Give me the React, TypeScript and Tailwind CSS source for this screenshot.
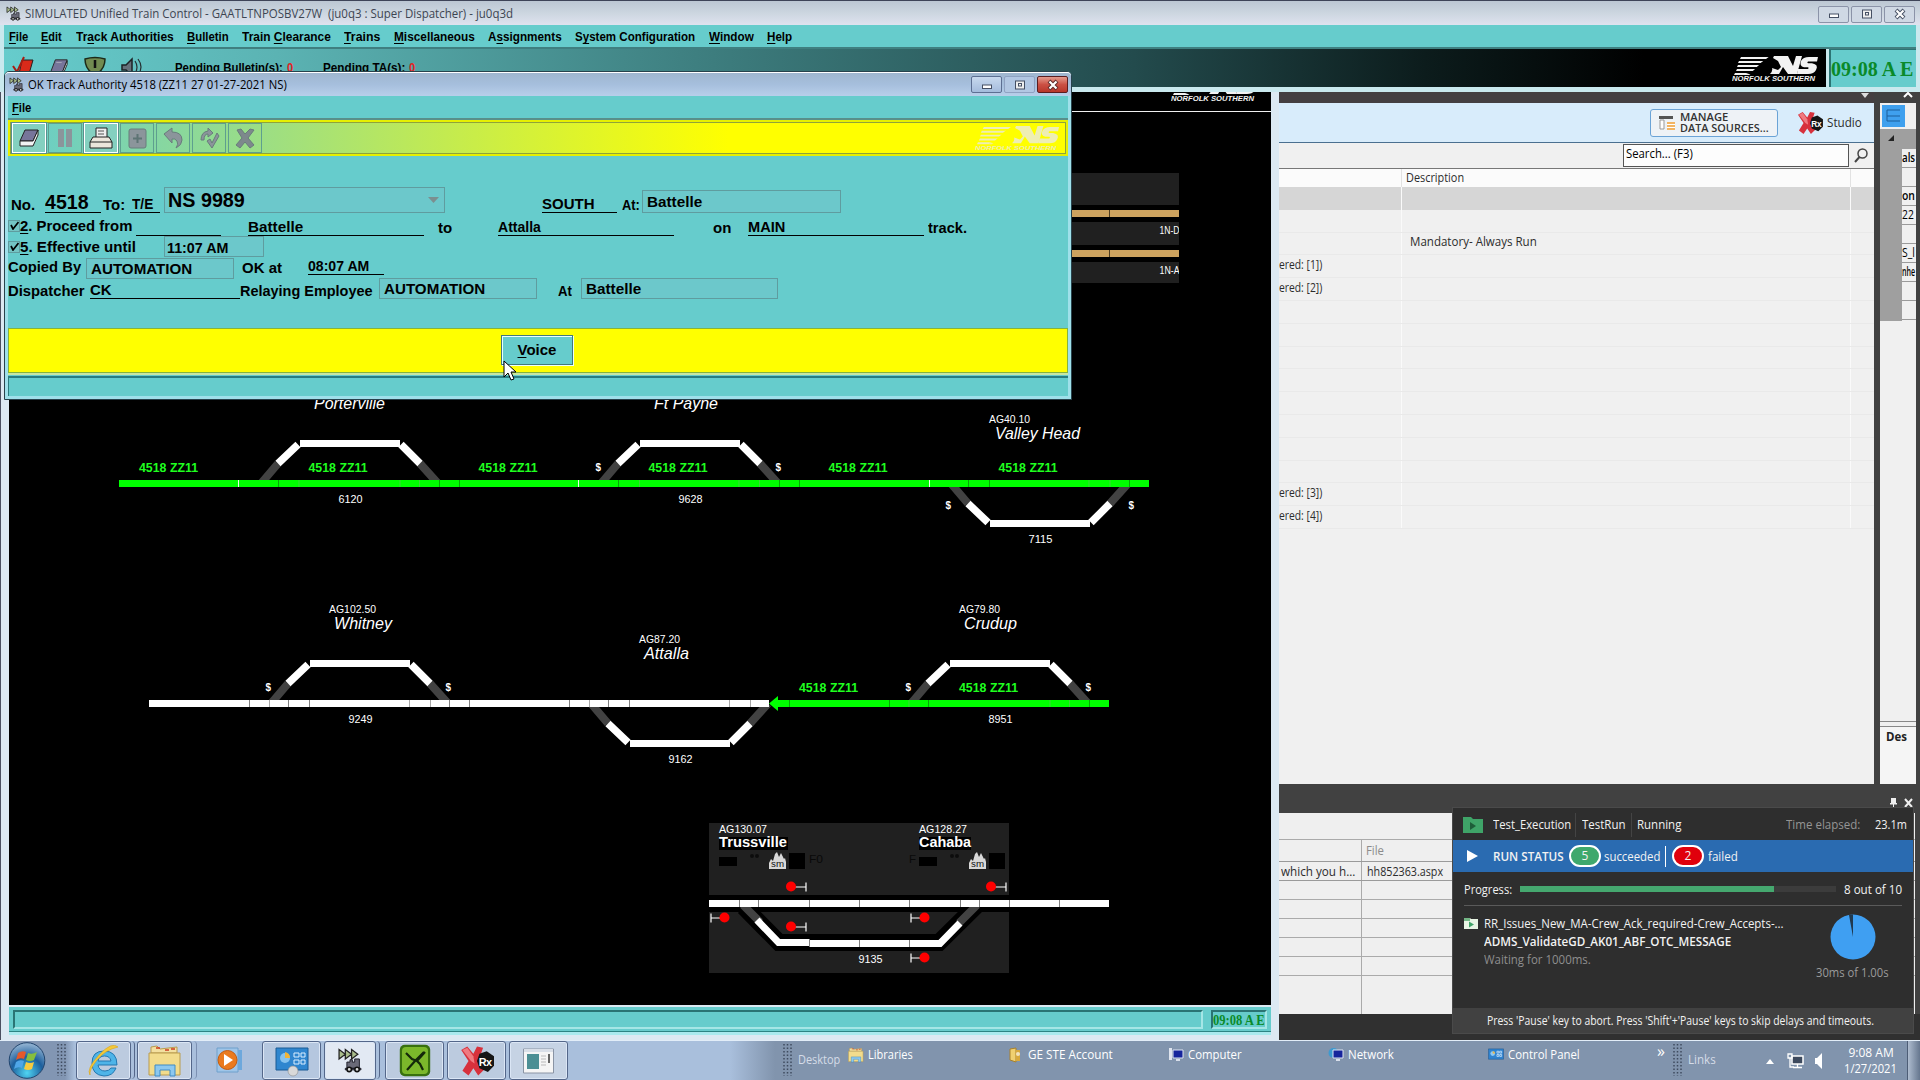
import React, { useLayoutEffect, useRef, useState } from 'react';

/* Text that is condensed or widened to an exact advance width. */
function T({ w, className = '', children }: { w: number; className?: string; children: React.ReactNode }) {
  const ref = useRef<HTMLSpanElement>(null);
  const [scale, setScale] = useState(1);
  useLayoutEffect(() => {
    if (ref.current && ref.current.offsetWidth) setScale(w / ref.current.offsetWidth);
  }, [w]);
  return (
    <span className={`inline-block shrink-0 whitespace-nowrap ${className}`} style={{ width: w }}>
      <span ref={ref} className="inline-block origin-left" style={{ transform: `scaleX(${scale})` }}>
        {children}
      </span>
    </span>
  );
}

function NSLogo({ className, color, cut }: { className: string; color: string; cut: string }) {
  return (
    <svg className={className} viewBox="0 0 88 25" preserveAspectRatio="none">
      <path d="M9 1H40L37 3H8zM7 5H32L29 7H6zM6 9H28L25 11H5zM5 13H24L21 15H4zM3 17H20L17 19H2z" fill={color} />
      <path d="M20 16L30 6L34 3L38 0L42 1L48 4L53 10L51 12L46 10L43 11L47 18H42L35 12L28 18H14z" fill={cut} />
      <path d="M42 0H56L61 10L64 0H70L65 18H56L51 11L47 18H38Q41 15 40 12L46 14L49 11L46 5L41 2z" fill={color} />
      <path d="M86 1L85 5.500H76Q74.500 6.500 76 7.200H80Q87 8.500 84 14Q82 18 76 18H65L66 13H76Q77.500 12 76 11.300H72Q67 10 69 5Q71 1 77 1z" fill={color} />
      <text x="0" y="25" fontSize="6.5" fontWeight="700" fontStyle="italic" fontFamily="Liberation Sans, Arial, sans-serif" textLength="83" lengthAdjust="spacingAndGlyphs" fill={color}>
        NORFOLK SOUTHERN
      </text>
    </svg>
  );
}

function TrainIcon({ className }: { className: string }) {
  return (
    <svg className={className} viewBox="0 0 16 16">
      <path d="M1 1l4 3-4 3zM5 1l4 3-4 3zM9 1l4 3-4 3z" fill="#a9bd8b" stroke="#222" strokeWidth=".8" />
      <path d="M6 9h2V7.500h1.500V9H11V7h3v6H6zM5 13h10v1H5z" fill="#6a6a78" stroke="#1c1c28" strokeWidth=".6" />
      <circle cx="7.500" cy="13.700" r="1.400" fill="#ddd" stroke="#111" />
      <circle cx="12.500" cy="13.700" r="1.400" fill="#ddd" stroke="#111" />
    </svg>
  );
}

function WinButtons({ active = false }: { active?: boolean }) {
  const base = 'flex h-[17px] w-[31px] items-center justify-center rounded-[2px] border';
  const pale = active ? 'border-[#5d6f92] bg-gradient-to-b from-[#c8d9ee] to-[#a4bbdc]' : 'border-[#8b93a8] bg-[#cfd8e4]';
  return (
    <div className="flex gap-[2px]">
      <div className={`${base} ${pale}`}>
        <svg className="h-3 w-3" viewBox="0 0 12 12"><rect x="1.500" y="6" width="9" height="3.500" fill="#fff" stroke="#454f63" /></svg>
      </div>
      <div className={`${base} ${active ? 'border-[#8fa2c2] bg-[#b2c7e3]' : pale}`}>
        <svg className="h-3 w-3" viewBox="0 0 12 12"><rect x="1.500" y="2" width="9" height="8" fill="#eee" stroke="#454f63" /><rect x="4.500" y="4.500" width="3" height="2.500" fill="none" stroke="#454f63" /></svg>
      </div>
      <div className={`${base} ${active ? 'border-[#5b1d20] bg-gradient-to-b from-[#e39a8e] via-[#cb5044] to-[#b8362a]' : pale}`}>
        <svg className="h-3 w-3" viewBox="0 0 12 12">
          <path d="M2 2L10 10M10 2L2 10" stroke={active ? '#5b2a2a' : '#454f63'} strokeWidth="4" />
          <path d="M2.500 2.500L9.500 9.500M9.500 2.500L2.500 9.500" stroke="#fff" strokeWidth="2.200" />
        </svg>
      </div>
    </div>
  );
}

const ARIAL = "font-['Liberation_Sans',Arial,sans-serif]";
const SEGOE = "font-['Open_Sans','Noto_Sans',sans-serif]";

/* ---------- Main window header ---------- */

const MENUS: [string, string, string, number][] = [
  ['', 'F', 'ile', 19], ['', 'E', 'dit', 21], ['Tr', 'a', 'ck Authorities', 98], ['', 'B', 'ulletin', 42],
  ['Train ', 'C', 'learance', 89], ['', 'T', 'rains', 36], ['', 'M', 'iscellaneous', 81], ['A', 's', 'signments', 74],
  ['S', 'y', 'stem Configuration', 120], ['', 'W', 'indow', 45], ['', 'H', 'elp', 25],
];

function BookIcon() {
  return (
    <svg className="h-full w-full" viewBox="0 0 22 22">
      <path d="M7 2H20L15 15H2z" fill="#77759a" stroke="#222" />
      <path d="M2 15v4h13l5-12V3l-5 12z" fill="#f2f2f2" stroke="#222" />
      <path d="M8 5h6" stroke="#aab" />
    </svg>
  );
}

function MainHeader() {
  return (
    <div className="absolute left-0 top-0 z-20 flex h-[92px] w-[1920px] flex-col border-t border-[#3e4458] bg-[#c9e9ee]">
      <div className="flex h-[24px] items-center bg-gradient-to-b from-[#bcc7d3] via-[#ccd6e0] to-[#dfe2ef] pl-[6px] pr-[5px]">
        <TrainIcon className="mr-[4px] h-[15px] w-[15px]" />
        <T w={488} className={`${SEGOE} pt-[2px] text-[12px] leading-[18px] text-[#3d4552]`}>
          SIMULATED Unified Train Control - GAATLTNPOSBV27W&nbsp; (ju0q3 : Super Dispatcher) - ju0q3d
        </T>
        <div className="ml-auto pt-[2px]"><WinButtons /></div>
      </div>
      <div className={`ml-[4px] mr-[4px] flex h-[22px] items-center gap-[13.300px] bg-[#66cccc] pl-[5px] pt-[2px] text-[13px] font-bold text-black ${ARIAL}`}>
        {MENUS.map(([a, u, b, w]) => (
          <T key={a + u + b} w={w}>{a}<span className="underline underline-offset-2">{u}</span>{b}</T>
        ))}
      </div>
      <div className="mx-[4px] h-[2px] bg-[#3f7f80]" />
      <div className="mx-[4px] flex h-[38px]">
        <div className="flex h-full w-[1822px] items-start bg-[linear-gradient(90deg,#66cccc_0%,#5bb3b3_15%,#3e7f80_38%,#234b4d_62%,#0c1c1c_78%,#000_90%)]">
          <svg className="ml-[8px] mt-[7px] h-[22px] w-[22px]" viewBox="0 0 22 22"><path d="M10 4h11l-4 14H7z" fill="#d92a1a" stroke="#222" /><path d="M1 10l4 6L12 1" fill="none" stroke="#a61d13" strokeWidth="2" /></svg>
          <span className="ml-[14px] mt-[9px] h-[20px] w-[22px]"><BookIcon /></span>
          <svg className="ml-[13px] mt-[7px] h-[22px] w-[24px]" viewBox="0 0 24 22"><path d="M2 3Q12 0 22 3Q22 12 15 17H9Q2 12 2 3z" fill="#718b51" stroke="#1d2a18" strokeWidth="1.500" /><path d="M12 4v8" stroke="#111" strokeWidth="2.500" /></svg>
          <svg className="ml-[13px] mt-[8px] h-[22px] w-[24px]" viewBox="0 0 24 22"><path d="M2 8h4l6-6v17l-6-6H2z" fill="#66707a" stroke="#1c2226" strokeWidth="1.500" /><path d="M15 4q4 6 0 13M18 2q6 8 0 16" fill="none" stroke="#243133" strokeWidth="1.200" /></svg>
          <div className={`ml-[31px] mt-[10px] flex text-[13px] font-bold leading-[18px] text-black ${ARIAL}`}>
            <T w={108}>Pending Bulletin(s):</T><T w={6} className="ml-[4px] text-[#e32222]">0</T>
            <T w={82} className="ml-[30px]">Pending TA(s):</T><T w={6} className="ml-[4px] text-[#e32222]">0</T>
          </div>
          <NSLogo className="ml-auto mr-[6px] mt-[7px] h-[25px] w-[88px]" color="#f2f2f2" cut="#000000" />
        </div>
        <div className="ml-[3px] flex h-[38px] flex-1 items-center border-l-2 border-t border-[#2c7474] bg-[#66cccc]">
          <T w={82} className="pt-[1px] font-['Liberation_Serif',serif] text-[22px] font-bold leading-[36px] text-[#0a8a2a]">09:08 A E</T>
        </div>
      </div>
    </div>
  );
}

/* ---------- Track line drawing ---------- */

function Label({ x, y, w, size, children, fill = '#fff', bold, italic }: { x: number; y: number; w: number; size: number; children: string; fill?: string; bold?: boolean; italic?: boolean }) {
  return (
    <text x={x} y={y} textLength={w} lengthAdjust="spacingAndGlyphs" fontSize={size} fill={fill} fontWeight={bold ? 700 : 400} fontStyle={italic ? 'italic' : 'normal'} fontFamily="Liberation Sans, Arial, sans-serif">
      {children}
    </text>
  );
}

/* A passing siding; x is the left end of its level part, dir -1 lies above the main. */
function Siding({ x, y, dir }: { x: number; y: number; dir: 1 | -1 }) {
  const lvl = y + dir * 40;
  const mid = y + dir * 20;
  const end = lvl - dir * 1;
  return (
    <g strokeWidth="8" fill="none">
      <path d={`M${x - 39} ${y}L${x - 22} ${mid}M${x + 138} ${y}L${x + 120} ${mid}`} stroke="#424242" />
      <path d={`M${x - 22} ${mid}L${x - 2} ${end}M${x + 120} ${mid}L${x + 101} ${end}`} stroke="#fff" strokeWidth="7.500" />
      <path d={`M${x} ${lvl}H${x + 100}`} stroke="#fff" strokeWidth="7" />
    </g>
  );
}

function Signal({ x, y, left }: { x: number; y: number; left?: boolean }) {
  const d = left ? -1 : 1;
  return (
    <g>
      <path d={`M${x} ${y + 0.5}h${d * (left ? 13.5 : 15)}m0 -4.500v9`} stroke="#fff" strokeWidth="1.200" fill="none" />
      <circle cx={x} cy={y} r="5" fill="#f00" />
    </g>
  );
}

function StationBlock({ x }: { x: number }) {
  return (
    <g>
      <path d={`M${x} 857h18v9h-18zM${x + 70} 853h16v16h-16z`} fill="#000" />
      <circle cx={x + 33} cy="856" r="2" fill="#0c0c0c" /><circle cx={x + 38} cy="856" r="2" fill="#0c0c0c" />
      <path d={`M${x + 50} 869v-6l2-4 2 2 2-7 2-2 2 5 2-4 3 6 1-1 1 4v7z`} fill="#d8d8d8" />
      <Label x={x + 52} y={867} w={13} size={9} fill="#111">sm</Label>
    </g>
  );
}

const GREEN = '#00ff00';
const AUTH: [number, number][] = [[139, 472], [308.5, 472], [478.5, 472], [648.5, 472], [828.5, 472], [998.5, 472], [799, 692], [959, 692]];
const LENGTHS: [number, number, string][] = [[338.5, 503, '6120'], [678.5, 503, '9628'], [1028.5, 543, '7115'], [348.5, 723, '9249'], [668.5, 763, '9162'], [988.5, 723, '8951'], [858.5, 963, '9135']];
const STATIONS: [number, number, number, string][] = [[314, 409, 71, 'Porterville'], [654, 409, 64, 'Ft Payne'], [995, 439, 85, 'Valley Head'], [334, 629, 58, 'Whitney'], [644, 659, 45, 'Attalla'], [964, 629, 53, 'Crudup']];
const POSTS: [number, number, number, string][] = [[989, 423, 41, 'AG40.10'], [329, 613, 47, 'AG102.50'], [639, 643, 41, 'AG87.20'], [959, 613, 41, 'AG79.80'], [719, 833, 48, 'AG130.07'], [919, 833, 48, 'AG128.27']];
const DOLLARS: [number, number][] = [[595.5, 471], [775.5, 471], [945.5, 509], [1128.5, 509], [265.5, 691], [445.5, 691], [905.5, 691], [1085.5, 691]];

function TrackMap() {
  return (
    <svg className="block h-[893px] w-[1262px] bg-black" viewBox="9 112 1262 893">
      <g fill="#202020"><path d="M1060 173h119v32h-119zM1060 222h119v23h-119zM1060 262h119v21h-119z" /></g>
      <path d="M1060 213.500h119M1060 253.500h119" stroke="#cda35f" strokeWidth="7" />
      <path d="M1109.500 210v7M1109.500 250v7" stroke="#4f3d1f" />
      <Label x={1159.5} y={234} w={20} size={10}>1N-D</Label>
      <Label x={1159.5} y={274} w={20} size={10}>1N-A</Label>
      <path d="M1179 224h2v12h-2zM1179 264h2v12h-2z" fill="#000" />

      <Siding x={300} y={483.5} dir={-1} />
      <Siding x={640} y={483.5} dir={-1} />
      <Siding x={990} y={483.5} dir={1} />
      <path d="M119 483.500H1149" stroke={GREEN} strokeWidth="7" />
      <path d="M238.500 480v7M578.500 480v7M929.500 480v7" stroke="#e8ffe8" />
      <path d="M278.500 480v7M459.500 480v7M618.500 480v7M779.500 480v7M799.500 480v7M968.500 480v7M989.500 480v7M1129.500 480v7M439.500 480v7" stroke="#06a806" />
      <path d="M299 480v7M400 480v7M419.500 480v7M639.500 480v7M739 480v7M759.500 480v7M1089 480v7M1110 480v7" stroke="#3fd43a" />

      <Siding x={310} y={703.5} dir={-1} />
      <Siding x={630} y={703.5} dir={1} />
      <Siding x={950} y={703.5} dir={-1} />
      <path d="M149 703.500H769" stroke="#fff" strokeWidth="7" />
      <path d="M249.500 700v7M288.500 700v7M309.500 700v7M469.500 700v7M569.500 700v7M608.500 700v7M629.500 700v7M449.500 700v7" stroke="#808080" />
      <path d="M269.500 700v7M409.500 700v7M430.500 700v7M589.500 700v7M729.500 700v7M750.500 700v7" stroke="#a8a8a8" />
      <path d="M776 703.500H1109" stroke={GREEN} strokeWidth="7" />
      <path d="M769 703.500L778 696v15z" fill={GREEN} />
      <path d="M789.500 700v7M889.500 700v7M928.500 700v7M1089.500 700v7" stroke="#06a806" />
      <path d="M909 700v7M1050 700v7M1069.500 700v7" stroke="#3fd43a" />

      <path d="M709 823h300v150h-300z" fill="#202020" />
      <path d="M709 903.500h300" stroke="#000" strokeWidth="17" />
      <path d="M744 907L779 942.500H939L977 905" stroke="#000" strokeWidth="17" fill="none" />
      <path d="M743 905L760 922M977 905L959 923" stroke="#424242" strokeWidth="8" />
      <path d="M757 920L778.500 942.500H809M809 943.500H940L960 923" stroke="#fff" strokeWidth="7" fill="none" />
      <path d="M709 903.500H1109" stroke="#fff" strokeWidth="7" />
      <path d="M739.500 900v7M758.500 900v7M809.500 900v7M859.500 900v7M909.500 900v7M960.500 900v7M979.500 900v7M1009.500 900v7M1059.500 900v7M809.500 939v8M859.500 940v7M909.500 940v7" stroke="#808080" />
      <path d="M719 837h69v13h-69zM919 837h52v13h-52z" fill="#000" />
      <Label x={719} y={847} w={68} size={14} bold>Trussville</Label>
      <Label x={919} y={847} w={52} size={14} bold>Cahaba</Label>
      <StationBlock x={719} />
      <StationBlock x={919} />
      <Label x={809} y={863} w={14} size={10} fill="#090909">F0</Label>
      <Label x={909} y={863} w={7} size={10} fill="#090909">F</Label>
      <Signal x={791} y={886.5} /><Signal x={991} y={886.5} /><Signal x={791} y={926.5} />
      <Signal x={724.5} y={917.5} left /><Signal x={924.5} y={917.5} left /><Signal x={924.5} y={957.5} left />

      {AUTH.map(([x, y]) => <Label key={`${x}-${y}`} x={x} y={y} w={59} size={13.5} fill="#1fff1f" bold>4518 ZZ11</Label>)}
      {LENGTHS.map(([x, y, s]) => <Label key={s} x={x} y={y} w={24} size={10}>{s}</Label>)}
      {STATIONS.map(([x, y, w, s]) => <Label key={s} x={x} y={y} w={w} size={17} italic>{s}</Label>)}
      {POSTS.map(([x, y, w, s]) => <Label key={s} x={x} y={y} w={w} size={10}>{s}</Label>)}
      {DOLLARS.map(([x, y]) => <Label key={`${x}${y}`} x={x} y={y} w={5.5} size={11} bold>$</Label>)}
    </svg>
  );
}

function TrackWindow() {
  return (
    <div className="absolute left-0 top-[91px] z-10 flex h-[949px] w-[1279px] flex-col border-l border-[#4b5060] bg-[#dce9f2] pl-[8px] pr-[8px]">
      <div className="flex h-[20px] justify-end bg-black pr-[12px] overflow-hidden">
        <NSLogo className="-mt-[15px] h-[25px] w-[88px]" color="#f2f2f2" cut="#000000" />
      </div>
      <div className="h-[1px] bg-[#f0f0f0]" />
      <TrackMap />
      <div className="mt-[2px] flex h-[25px] border-b border-[#2c8484] bg-[#66cccc] pb-[2px] pl-[4px] pt-[3px]">
        <div className="w-[1190px] border-b-2 border-l-2 border-r-2 border-t-2 border-b-[#a5e6e6] border-l-[#2a7474] border-r-[#a5e6e6] border-t-[#2a7474]" />
        <div className="ml-[8px] flex w-[56px] items-center border-2 border-b-[#a5e6e6] border-l-[#2a7474] border-r-[#a5e6e6] border-t-[#2a7474]">
          <T w={52} className="font-['Liberation_Serif',serif] text-[15px] font-bold leading-[16px] text-[#0a8a2a]">09:08 A E</T>
        </div>
      </div>
      <div className="h-[3px] bg-[#a9eaee]" />
    </div>
  );
}

/* ---------- Track authority dialog ---------- */

function ToolButton({ children, on }: { children: React.ReactNode; on?: boolean }) {
  return (
    <div className={`flex h-[30px] w-[34px] items-center justify-center border ${on ? 'border-white bg-[#84d0c0] shadow-[0_0_0_1px_#5b8e8e]' : 'border-[#5e9f8f]'}`}>
      <svg className="h-[24px] w-[26px]" viewBox="0 0 26 24">{children}</svg>
    </div>
  );
}

const BOX = 'flex items-center border border-[#5f9c9f] bg-[#6cc8cb]';

function Check() {
  return (
    <span className="flex h-[12px] w-[12px] shrink-0 items-center justify-center border border-[#5f9c9f] bg-[#74c4c4]">
      <svg className="h-[9px] w-[9px]" viewBox="0 0 9 9"><path d="M1 4l2 4L8.500 1" fill="none" stroke="#000" strokeWidth="1.700" /></svg>
    </span>
  );
}

function Dialog() {
  return (
    <div className="absolute left-[4px] top-[71px] z-30 flex h-[329px] w-[1068px] flex-col rounded-t-[5px] border border-[#28424c] bg-[#9fe0ea] px-[3px] pb-[3px]">
      <div className="-mx-[3px] flex h-[24px] items-center rounded-t-[4px] border-t border-white bg-gradient-to-b from-[#9fb6cf] via-[#a6bfdd] to-[#b8cfea] pl-[4px] pr-[3px]">
        <TrainIcon className="h-[15px] w-[15px]" />
        <T w={259} className={`ml-[4px] pt-[1px] text-[12px] leading-[18px] text-black ${SEGOE}`}>OK Track Authority 4518 (ZZ11 27 01-27-2021 NS)</T>
        <div className="ml-auto"><WinButtons active /></div>
      </div>
      <div className={`flex h-[22px] items-center bg-[#66cccc] pl-[4px] pt-[2px] text-[13px] font-bold ${ARIAL}`}>
        <T w={19}><span className="underline underline-offset-2">F</span>ile</T>
      </div>
      <div className="h-[2px] bg-[#588f8b]" />
      <div className="flex h-[36px] items-center gap-[2px] border-2 border-[#e6f000] bg-[linear-gradient(90deg,#66cccc_0%,#ffff00_68%)] pl-[2px] shadow-[inset_0_0_0_1px_#8fa33a]">
        <ToolButton on><path d="M9 4H22L17 15H4z" fill="#77759a" stroke="#222" /><path d="M4 15v5h13l5-11V4l-5 11z" fill="#f2f2f2" stroke="#222" /></ToolButton>
        <ToolButton><path d="M6 3h6v18H6zM14 3h6v18h-6z" fill="#8b959b" /></ToolButton>
        <ToolButton on><path d="M8 12V2h11v10" fill="#eee" stroke="#222" /><path d="M10 5h6M10 8h6" stroke="#555" /><path d="M5 11h16l3 5v6H2v-6z" fill="#ece6dc" stroke="#222" /><path d="M2 16h22" stroke="#222" /></ToolButton>
        <ToolButton><rect x="5" y="3" width="17" height="19" rx="2" fill="#8b959b" stroke="#697c7c" /><path d="M13.500 8v9M9 12.500h9" stroke="#5d7474" strokeWidth="2" /></ToolButton>
        <ToolButton><path d="M4 8l8-6v4q10 0 10 8q0 5-6 8q3-4 1-7t-5-2v4z" fill="#8b959b" stroke="#697c7c" /></ToolButton>
        <ToolButton><path d="M5 14q0-8 7-9V2l5 5-5 4V8q-4 0-4 6zM11 15l3-2 2 4 5-10 2 3-7 12z" fill="#8b959b" stroke="#697c7c" /></ToolButton>
        <ToolButton><path d="M5 4l4-1 4 5 5-5 4 1-6 8 6 7-4 3-5-6-5 6-4-3 6-7z" fill="#7d888c" stroke="#697c7c" /></ToolButton>
        <NSLogo className="ml-auto mr-[5px] h-[24px] w-[86px]" color="#eeeeb4" cut="#ffff00" />
      </div>

      <div className={`flex flex-1 flex-col bg-[#66cccc] text-[15px] font-bold leading-[17px] text-black ${ARIAL}`}>
        <div className="mt-[31px] flex h-[26px] items-end pl-[3px]">
          <T w={24}>No.</T>
          <div className="ml-[10px] flex h-[23px] w-[56px] items-end border-b border-black text-[20px] leading-[20px]"><T w={44}>4518</T></div>
          <T w={22} className="ml-[2px]">To:</T>
          <div className="ml-[5px] flex h-[18px] w-[30px] items-end border-b border-black pl-[2px]"><T w={21}>T/E</T></div>
          <div className={`ml-[4px] h-[26px] w-[281px] pl-[3px] text-[20px] leading-[22px] ${BOX}`}>
            <T w={77}>NS 9989</T>
            <svg className="ml-auto mr-[5px] h-[6px] w-[11px]" viewBox="0 0 11 6"><path d="M0 0h11L5.500 6z" fill="#7b8f90" /></svg>
          </div>
          <div className="ml-[97px] flex h-[18px] w-[75px] items-end border-b border-black"><T w={53}>SOUTH</T></div>
          <T w={18} className="ml-[5px]">At:</T>
          <div className={`ml-[2px] h-[23px] w-[199px] pl-[4px] ${BOX}`}><T w={55}>Battelle</T></div>
        </div>
        <div className="flex h-[23px] items-end">
          <span className="mb-[2px] flex items-center"><Check /><T w={112}><span className="underline underline-offset-2">2</span>. Proceed from</T></span>
          <div className="ml-[4px] w-[85px] border-b border-black" />
          <div className="ml-[27px] w-[176px] border-b border-black leading-[16px]"><T w={55}>Battelle</T></div>
          <T w={14} className="ml-[14px]">to</T>
          <div className="ml-[46px] w-[176px] border-b border-black leading-[16px]"><T w={43}>Attalla</T></div>
          <T w={18} className="ml-[39px]">on</T>
          <div className="ml-[17px] w-[176px] border-b border-black leading-[16px]"><T w={37}>MAIN</T></div>
          <T w={39} className="ml-[4px]">track.</T>
        </div>
        <div className="flex h-[21px] items-center">
          <span className="flex items-center"><Check /><T w={116}><span className="underline underline-offset-2">5</span>. Effective until</T></span>
          <div className={`ml-[28px] h-[21px] w-[100px] pl-[2px] pt-[1px] ${BOX}`}><T w={61}>11:07 AM</T></div>
        </div>
        <div className="mt-[1px] flex h-[21px] items-start">
          <T w={73}>Copied By</T>
          <div className={`ml-[5px] h-[21px] w-[148px] pl-[4px] ${BOX}`}><T w={101}>AUTOMATION</T></div>
          <T w={40} className="ml-[8px] mt-[1px]">OK at</T>
          <div className="ml-[26px] h-[17px] w-[76px] border-b border-black leading-[16px]"><T w={61}>08:07 AM</T></div>
        </div>
        <div className="-mt-[1px] flex h-[21px] items-end">
          <T w={77}>Dispatcher</T>
          <div className="ml-[5px] w-[150px] border-b border-black"><T w={22}>CK</T></div>
          <T w={133}>Relaying Employee</T>
          <div className={`ml-[6px] h-[21px] w-[158px] pl-[4px] ${BOX}`}><T w={101}>AUTOMATION</T></div>
          <T w={14} className="ml-[21px]">At</T>
          <div className={`ml-[9px] h-[21px] w-[197px] pl-[4px] ${BOX}`}><T w={55}>Battelle</T></div>
        </div>
      </div>

      <div className="flex h-[45px] justify-center border border-[#85b33c] bg-[#ffff00] pt-[6px]">
        <div className={`-ml-[2px] flex h-[30px] w-[72px] items-center justify-center border border-[#43797b] bg-[#66cccc] pt-[1px] text-[15px] font-bold shadow-[inset_1px_1px_0_#e8ffff,1px_1px_0_#e8ffff] ${ARIAL}`}>
          <T w={39}><span className="underline underline-offset-2">V</span>oice</T>
        </div>
      </div>
      <div className="h-[3px] border-b border-[#66cccc] bg-[#c9e6a0]" />
      <div className="h-[20px] border-l border-t-2 border-[#2a7c80] bg-[#66cccc]" />
    </div>
  );
}

/* ---------- Test studio behind ---------- */

const ROWS = Array.from({ length: 24 }, (_, i) => i);
const ROW_TEXT: Record<number, string> = { 3: 'ered: [1])', 4: 'ered: [2])', 13: 'ered: [3])', 14: 'ered: [4])' };

function RxMark({ className }: { className: string }) {
  return (
    <svg className={className} viewBox="0 0 28 26">
      <path d="M1 4l5-3 5 6 3-6 5 1-3 9 4 9-5 5-4-6-4 6-5-4 5-8z" fill="#d7313c" />
      <path d="M2 4l4-2 5 7 1 6-3-2z" fill="#f07a80" />
      <path d="M16 7l6-2 6 4v8l-5 5-7-3-2-6z" fill="#151515" />
      <text x="15.500" y="17" fontSize="9" fontWeight="700" fontFamily="Liberation Sans, sans-serif" fill="#fff" textLength="11">Rx</text>
    </svg>
  );
}

const PROPERTY_ROWS: [string, number, boolean][] = [['als', 13, true], ['', 0, false], ['on', 13, true], ['22', 12, false], ['', 0, false], ['S_l', 13, false], ['nhe', 13, true], ['', 0, false], ['', 0, false]];

function Studio() {
  return (
    <div className={`absolute left-[1279px] top-[91px] flex h-[949px] w-[641px] flex-col bg-[#414141] text-[12px] text-[#2c2c2c] ${SEGOE}`}>
      <div className="flex h-[693px]">
        <div className="flex w-[595px] flex-col bg-[#f0f0f0]">
          <div className="flex h-[12px] items-start justify-end bg-[#443f41] pr-[4px]">
            <svg className="h-[8px] w-[10px]" viewBox="0 0 10 8"><path d="M1 2h8L5 7z" fill="#ddd" /></svg>
          </div>
          <div className="flex h-[40px] items-center justify-end border-b border-[#4b7090] bg-[#d8ecfb] pr-[12px]">
            <div className="flex h-[28px] w-[128px] items-center rounded-[3px] border border-[#6ba3d6] bg-[#eef2f6] pl-[8px]">
              <svg className="h-[16px] w-[17px]" viewBox="0 0 17 16"><path d="M0 1h14v3H0z" fill="#555" /><path d="M1 5h4v9H1z" fill="#fff" stroke="#999" /><path d="M8 7h8v8H8z" fill="#f2b463" /><path d="M8 9.500h8M8 12.500h8" stroke="#fff" /></svg>
              <div className="ml-[4px] flex flex-col text-[10.500px] font-semibold leading-[11px] text-[#333]">
                <T w={48}>MANAGE</T>
                <T w={89}>DATA SOURCES...</T>
              </div>
            </div>
            <RxMark className="ml-[18px] h-[24px] w-[28px]" />
            <T w={35} className="ml-[3px] text-[13px]">Studio</T>
          </div>
          <div className="flex h-[26px] items-center justify-end border-b border-[#777] bg-[#f0f0f0] pr-[6px]">
            <div className="flex h-[23px] w-[226px] items-center border border-[#555] bg-[#fdfdfd] pb-[3px] pl-[2px] text-black"><T w={67}>Search... (F3)</T></div>
            <svg className="ml-[5px] h-[15px] w-[14px]" viewBox="0 0 14 15"><circle cx="8.500" cy="5.500" r="4.500" fill="none" stroke="#444" strokeWidth="1.500" /><path d="M5.500 9L1 14" stroke="#444" strokeWidth="2" /></svg>
          </div>
          <div className="flex h-[18px] items-center bg-[#fbfbfb]">
            <div className="h-full w-[123px] border-r border-[#e2e2e2]" />
            <div className="flex h-full w-[449px] items-center border-r border-[#e2e2e2] pl-[4px]"><T w={58}>Description</T></div>
          </div>
          <div className="flex flex-1 flex-col overflow-hidden">
            {ROWS.map((i) => (
              <div key={i} className={`flex h-[22.800px] shrink-0 items-center ${i === 0 ? 'bg-[#d6d6d6]' : i < 15 ? 'border-b border-[#e9e9e9]' : ''}`}>
                <div className={`flex h-full w-[123px] items-center pb-[2px] ${i < 15 ? 'border-r border-[#fafafa]' : ''}`}>{ROW_TEXT[i] && <T w={43}>{ROW_TEXT[i]}</T>}</div>
                <div className={`flex h-full w-[449px] items-center pb-[2px] pl-[8px] ${i < 15 ? 'border-r border-[#fafafa]' : ''}`}>{i === 2 && <T w={127}>Mandatory- Always Run</T>}</div>
              </div>
            ))}
          </div>
        </div>
        <div className="ml-[6px] flex w-[36px] flex-col bg-[#f0f0f0]">
          <div className="flex h-[12px] justify-end bg-[#414141] pr-[3px]"><svg className="h-[7px] w-[10px]" viewBox="0 0 10 7"><path d="M1 6l4-4 4 4" stroke="#fff" strokeWidth="2" fill="none" /></svg></div>
          <div className="h-[26px] pl-[2px] pt-[2px]">
            <svg className="h-[22px] w-[23px]" viewBox="0 0 23 22"><path d="M0 0h23v22H0z" fill="#3fa0ee" /><path d="M5 5h13M5 11h13M5 16h13M5 5v11" stroke="#1c5f9b" /></svg>
          </div>
          <div className="flex h-[192px]">
            <div className="w-[22px] bg-[#9f9f9f] pl-[8px] pt-[6px]"><svg className="h-[7px] w-[7px]" viewBox="0 0 7 7"><path d="M6 0v6H0z" fill="#222" /></svg></div>
            <div className="flex w-[14px] flex-col overflow-hidden">
              <div className="h-[20px] bg-[#9f9f9f]" />
              {PROPERTY_ROWS.map(([s, w, bold], i) => (
                <div key={i} className={`h-[19px] shrink-0 border-b border-[#9a9a9a] leading-[18px] text-black ${bold ? 'font-semibold' : ''}`}>{s && <T w={w}>{s}</T>}</div>
              ))}
            </div>
          </div>
          <div className="mt-auto flex h-[58px] items-start border-t border-[#888] bg-[#f5f5f5] pl-[6px] pt-[1px] font-bold text-[#222] shadow-[0_-4px_0_#f0f0f0,0_-5px_0_#888]"><T w={21}>Des</T></div>
        </div>
      </div>
      <div className="flex h-[29px] items-center justify-end gap-[6px] pr-[7px] pt-[8px]">
        <svg className="h-[10px] w-[9px]" viewBox="0 0 9 10"><path d="M2 0h5v5h1v1.500H5V10H4V6.500H1V5h1z" fill="#eee" /></svg>
        <svg className="h-[10px] w-[9px]" viewBox="0 0 9 10"><path d="M1 1l7 8M8 1L1 9" stroke="#eee" strokeWidth="2" /></svg>
      </div>
      <div className="mr-[5px] flex h-[201px] flex-col bg-[#efefef]">
        <div className="h-[27px] border-b border-[#aaa]" />
        <div className="flex h-[22px] items-center border-b border-[#9a9a9a] text-[#8b8b8b]"><div className="h-full w-[83px] border-r border-[#aaa]" /><T w={18} className="ml-[4px]">File</T></div>
        <div className="flex h-[19px] items-center border-b border-[#9a9a9a]">
          <div className="flex h-full w-[83px] items-center border-r border-[#aaa] pl-[2px] pt-[2px]"><T w={74}>which you h...</T></div><T w={76} className="ml-[5px] pt-[2px]">hh852363.aspx</T>
        </div>
        {[0, 1, 2, 3, 4].map((i) => <div key={i} className="h-[19px] border-b border-[#aaa]"><div className="h-full w-[83px] border-r border-[#aaa]" /></div>)}
        <div className="w-[83px] flex-1 border-r border-[#aaa]" />
      </div>
      <div className="flex-1 bg-[#303030]" />
    </div>
  );
}

function RunStatus() {
  return (
    <div className={`absolute left-[1452px] top-[807px] z-10 flex h-[227px] w-[462px] flex-col border border-[#4a4a4a] bg-[#2e2e2e] text-[12px] leading-[18px] text-[#f2f2f2] ${SEGOE}`}>
      <div className="flex h-[32px] items-center pl-[10px] pr-[6px] pt-[2px]">
        <svg className="h-[16px] w-[20px]" viewBox="0 0 20 16"><path d="M0 0h8l2 2h10v14H0z" fill="#3fa468" /><path d="M7 5l6 4-6 4z" fill="#1e5d39" /></svg>
        <T w={78} className="ml-[10px]">Test_Execution</T>
        <div className="ml-[4px] mr-[6px] h-[24px] w-px bg-[#444]" />
        <T w={43}>TestRun</T>
        <div className="ml-[6px] mr-[5px] h-[24px] w-px bg-[#444]" />
        <T w={44}>Running</T>
        <T w={74} className="ml-auto text-[#959595]">Time elapsed:</T>
        <T w={32} className="ml-[15px]">23.1m</T>
      </div>
      <div className="flex h-[32px] items-center bg-[#2a6bb1] pl-[14px]">
        <svg className="h-[12px] w-[11px]" viewBox="0 0 11 12"><path d="M0 0l11 6-11 6z" fill="#fff" /></svg>
        <T w={71} className="ml-[15px] pt-[2px] font-semibold">RUN STATUS</T>
        <div className="ml-[5px] flex h-[22px] w-[32px] items-center justify-center rounded-full border-2 border-white bg-[#3fa86c]">5</div>
        <T w={56} className="ml-[3px] pt-[2px]">succeeded</T>
        <div className="ml-[5px] h-[21px] w-px bg-white" />
        <div className="ml-[6px] flex h-[22px] w-[32px] items-center justify-center rounded-full border-2 border-white bg-[#e0000c]">2</div>
        <T w={30} className="ml-[4px] pt-[2px]">failed</T>
      </div>
      <div className="mx-[11px] flex h-[34px] items-center border-b border-[#5a5a5a]">
        <T w={48} className="pt-[2px]">Progress:</T>
        <div className="ml-[8px] mt-[1px] h-[6px] w-[317px] bg-[#3c3c3c]"><div className="h-full w-[254px] bg-[#45a86f]" /></div>
        <T w={58} className="ml-[8px] pt-[2px]">8 out of 10</T>
      </div>
      <div className="flex flex-1 pl-[11px]">
        <svg className="mt-[12px] h-[11px] w-[14px]" viewBox="0 0 14 11"><path d="M0 0h6l1 1h7v10H0z" fill="#e8f5e4" /><path d="M0 0h6v3H0z" fill="#74b686" /><path d="M5 3.500l5 3-5 3z" fill="#3fa468" /></svg>
        <div className="ml-[6px] mt-[9px] flex w-[301px] flex-col">
          <T w={300}>RR_Issues_New_MA-Crew_Ack_required-Crew_Accepts-...</T>
          <T w={247} className="font-semibold">ADMS_ValidateGD_AK01_ABF_OTC_MESSAGE</T>
          <T w={107} className="text-[#8f8f8f]">Waiting for 1000ms.</T>
        </div>
        <div className="ml-[30px] mt-[8px] flex w-[75px] flex-col items-center">
          <svg className="h-[46px] w-[46px]" viewBox="0 0 46 46"><circle cx="23" cy="23" r="22.500" fill="#3f9ff2" /><path d="M23 23L19 1Q21 .3 23 .5z" fill="#20394f" /></svg>
          <T w={73} className="mt-[4px] text-[#9b9b9b]">30ms of 1.00s</T>
        </div>
      </div>
      <div className="flex h-[25px] items-center bg-[#414141] pl-[34px]"><T w={387}>Press 'Pause' key to abort. Press 'Shift'+'Pause' keys to skip delays and timeouts.</T></div>
    </div>
  );
}

/* ---------- Taskbar ---------- */

function Grip() {
  return (
    <svg className="h-[32px] w-[9px] shrink-0" viewBox="0 0 9 32">
      <path d="M1 0v32M4.500 0v32M8 0v32" stroke="#3f4b5f" strokeWidth="1.500" strokeDasharray="1.500 2" />
    </svg>
  );
}

function FolderIcon({ className }: { className: string }) {
  return (
    <svg className={className} viewBox="0 0 34 32">
      <path d="M3 2l6-1 3 3 17-2v6H3z" fill="#f3e0a0" stroke="#b99b4f" />
      <path d="M8 3h4M17 5h4M23 4h4" stroke="#cc3b22" strokeWidth="1.500" />
      <path d="M1 8h31v22H1z" fill="#f2dc8c" stroke="#b99b4f" />
      <path d="M7 31V20h20v11h-5v-6H12v6z" fill="#8cc8ef" stroke="#3f8bc4" />
    </svg>
  );
}

function TaskButton({ className, children }: { className: string; children: React.ReactNode }) {
  return <div className={`flex h-[39px] shrink-0 items-center justify-center rounded-[3px] border border-[#54678a] shadow-[inset_0_0_0_1px_#dbe6f5] ${className}`}>{children}</div>;
}

function Panel({ className }: { className: string }) {
  return (
    <svg className={className} viewBox="0 0 34 30">
      <path d="M1 2h32v22H1z" fill="#2f83cf" stroke="#1b4f86" /><circle cx="10" cy="12" r="5" fill="#8ec9f5" /><path d="M10 12V7a5 5 0 0 1 5 5z" fill="#f2b53a" />
      <path d="M19 7h4v4h-4zM25 7h4v4h-4zM19 14h4v4h-4zM25 14h4v4h-4z" fill="none" stroke="#d9edff" strokeWidth="1.500" />
    </svg>
  );
}

function Computer({ className, globe }: { className: string; globe?: boolean }) {
  return (
    <svg className={className} viewBox="0 0 16 16">
      {globe && <circle cx="5.500" cy="6" r="5" fill="#3d9ad0" />}
      <path d="M5 3h10v8H5z" fill="#16259c" stroke="#dde5f2" /><path d="M8 12h4v2H8z" fill="#d8deea" />{!globe && <path d="M1 1h3v12H1z" fill="#dfe4ee" />}
    </svg>
  );
}

function Taskbar() {
  return (
    <div className={`absolute left-0 top-[1040px] z-40 flex h-[40px] w-[1920px] border-t border-[#e2edf8] bg-[linear-gradient(90deg,#8296b3_0,#8296b3_65px,#a9bfdc_75px,#a9bfdc_730px,#8194ad_775px)] text-[12px] leading-[16px] text-white ${SEGOE}`}>
      <svg className="ml-[8px] mt-[1px] h-[37px] w-[38px] shrink-0" viewBox="0 0 38 37">
        <defs><radialGradient id="orb" cx=".5" cy=".85" r=".9"><stop offset="0" stopColor="#4fd4f2" /><stop offset=".5" stopColor="#1c5f9d" /><stop offset="1" stopColor="#a9c3dc" /></radialGradient></defs>
        <circle cx="19" cy="18.500" r="17.800" fill="url(#orb)" stroke="#21456e" />
        <path d="M10 11q4-3 8-1l-2 7q-4-2-8 1z" fill="#e5592a" /><path d="M20 11q4 2 9-1l-3 8q-4 2-8 0z" fill="#86bf3e" />
        <path d="M8 20q4-3 8-1l-2 7q-4-2-8 1z" fill="#4fa6e8" /><path d="M18 20q4 2 8 0l-2 7q-4 2-8 0z" fill="#f7cb3f" />
      </svg>
      <div className="ml-[11px] mt-[3px]"><Grip /></div>
      <TaskButton className="ml-[10px] w-[55px] bg-[#bccbdf]">
        <svg className="h-[32px] w-[34px]" viewBox="0 0 34 32"><path d="M30 20H11q1 6 7 6 4 0 6-3h5q-3 8-12 8Q5 30 5 18T17 6q13 0 13 14zM11 16h13q-1-5-6.500-5T11 16z" fill="#4eb4e8" stroke="#2377b0" /><path d="M3 30Q-1 24 12 10T31 2Q18 5 10 15T3 30z" fill="#f4c93a" stroke="#d9a21c" strokeWidth=".6" /></svg>
      </TaskButton>
      <div className="h-[38px] w-[4px] rounded-r border-r border-[#54678a]" />
      <TaskButton className="ml-[2px] w-[55px] bg-[#c3d0e2]"><FolderIcon className="h-[32px] w-[34px]" /></TaskButton>
      <div className="h-[38px] w-[5px] rounded-r border-r border-[#7c90b2]" />
      <div className="flex h-[38px] w-[65px] items-center justify-center">
        <svg className="-ml-[2px] h-[26px] w-[28px]" viewBox="0 0 28 26"><path d="M2 1h21v24H2z" fill="#9fc5e8" stroke="#6fa0cc" /><path d="M23 3h4v20h-4z" fill="#6da8dc" /><circle cx="12.500" cy="13" r="9.500" fill="#ea7a1e" stroke="#c45c10" /><path d="M9 7l9 6-9 6z" fill="#fff" /></svg>
      </div>
      <TaskButton className="w-[59px] bg-[#b5c7df]">
        <svg className="h-[32px] w-[34px]" viewBox="0 0 34 32"><path d="M1 3h32v22H1z" fill="#2f86cf" stroke="#1b5a94" /><circle cx="10" cy="13" r="5" fill="#85c2ee" /><path d="M10 13V7a6 6 0 0 1 5 6z" fill="#f0b437" /><path d="M19 8h5v4h-5zM26 8h4v4h-4zM19 15h5v4h-5zM26 15h4v4h-4z" fill="none" stroke="#dcefff" /><circle cx="18" cy="26" r="5" fill="#d9d9d9" stroke="#8d8d8d" strokeWidth=".6" /></svg>
      </TaskButton>
      <TaskButton className="ml-[3px] w-[52px] bg-[#e2e9f3]"><TrainIcon className="h-[25px] w-[26px]" /></TaskButton>
      <div className="h-[38px] w-[4px] rounded-r border-r border-[#54678a]" />
      <TaskButton className="ml-[5px] w-[59px] bg-[#bccbdf]">
        <svg className="h-[33px] w-[32px]" viewBox="0 0 32 33"><rect x=".8" y=".8" width="30.400" height="31.400" rx="5" fill="#38700f" /><rect x="3" y="3" width="26" height="27" rx="4" fill="#7bb82b" /><path d="M7 9l6 6 5 2 8-9M25 8l-9 9-8 9M18 17l3 3 3 6" fill="none" stroke="#14290a" strokeWidth="2.200" /></svg>
      </TaskButton>
      <TaskButton className="ml-[3px] w-[59px] bg-[#bccbdf]"><RxMark className="h-[32px] w-[34px]" /></TaskButton>
      <TaskButton className="ml-[3px] w-[59px] bg-[#c6d3e4]">
        <svg className="h-[26px] w-[31px]" viewBox="0 0 31 26"><path d="M.500 1h30v24H.500z" fill="#f5f5f5" stroke="#8a94a4" /><path d="M1 1h29v3H1z" fill="#d9dfe8" /><path d="M4 6h12v15H4z" fill="#4c8f94" /><path d="M18 8h5M18 11h5M18 14h5M18 17h5" stroke="#b9b9b9" /><path d="M26 6v9" stroke="#333" strokeWidth="1.500" /></svg>
      </TaskButton>

      <div className="ml-[215px] mt-[3px]"><Grip /></div>
      <T w={42} className="ml-[6px] mt-[11px] text-[#d5dce8]">Desktop</T>
      <div className="ml-[8px] mt-[4px] flex h-[20px] items-center">
        <div className="flex w-[160px] items-center"><FolderIcon className="mr-[4px] h-[16px] w-[16px]" /><T w={45}>Libraries</T></div>
        <div className="flex w-[160px] items-center"><svg className="mr-[4px] h-[16px] w-[16px]" viewBox="0 0 16 16"><path d="M2 2l6-1v14l-6-2z" fill="#f0d070" stroke="#a8812c" /><path d="M8 3h4v11H8z" fill="#d8a93c" /><circle cx="10" cy="7" r="2" fill="#efe2c0" /></svg><T w={85}>GE STE Account</T></div>
        <div className="flex w-[160px] items-center"><Computer className="mr-[4px] h-[16px] w-[16px]" /><T w={54}>Computer</T></div>
        <div className="flex w-[160px] items-center"><Computer globe className="mr-[4px] h-[16px] w-[16px]" /><T w={46}>Network</T></div>
        <div className="flex w-[169px] items-center"><Panel className="mr-[4px] h-[16px] w-[16px]" /><T w={72}>Control Panel</T></div>
        <span className="-mt-[8px] text-[16px]">»</span>
      </div>
      <div className="ml-[8px] mt-[3px]"><Grip /></div>
      <T w={28} className="ml-[6px] mt-[11px] text-[#d5dce8]">Links</T>
      <svg className="ml-[50px] mt-[18px] h-[5px] w-[8px]" viewBox="0 0 8 5"><path d="M4 0l4 5H0z" fill="#fff" /></svg>
      <svg className="ml-[13px] mt-[12px] h-[16px] w-[17px]" viewBox="0 0 17 16"><path d="M5 3h11v8H5z" fill="#3d4a5e" stroke="#fff" strokeWidth="1.500" /><path d="M10.500 11v3M6 14.500h9M1 1h4v4H1zM3 5v9h4" stroke="#fff" fill="none" strokeWidth="1.300" /></svg>
      <svg className="ml-[11px] mt-[12px] h-[16px] w-[8px]" viewBox="0 0 8 16"><path d="M0 5h2l5-5v16l-5-5H0z" fill="#fff" /></svg>
      <div className="ml-[18px] mt-[4px] flex w-[60px] flex-col items-center"><T w={45}>9:08 AM</T><T w={53}>1/27/2021</T></div>
      <div className="ml-auto h-full w-[13px] shrink-0 border-l border-[#4d5d76] bg-gradient-to-r from-[#aebccf] to-[#66778f]" />
    </div>
  );
}

export default function App() {
  return (
    <div className="relative h-[1080px] w-[1920px] overflow-hidden bg-[#414141]">
      <Studio />
      <RunStatus />
      <TrackWindow />
      <MainHeader />
      <Dialog />
      <Taskbar />
      <svg className="absolute left-[503px] top-[360px] z-50 h-[21px] w-[13px]" viewBox="0 0 13 21"><path d="M1 1v16l4-4 3 7 3-1-3-7h5z" fill="#fff" stroke="#000" /></svg>
    </div>
  );
}
